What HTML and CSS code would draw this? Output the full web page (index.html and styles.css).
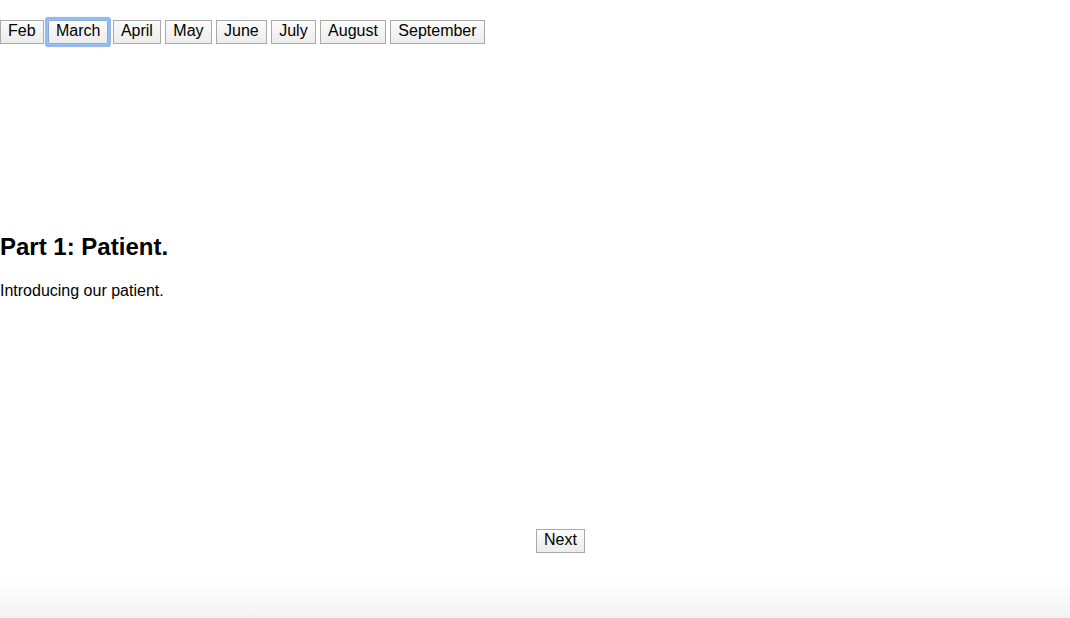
FILE: index.html
```html
<!DOCTYPE html>
<html>
<head>
<meta charset="utf-8">
<link rel="stylesheet" href="styles.css">
</head>
<body>
<nav class="months">
  <button class="btn">Feb</button>
  <button class="btn focused">March</button>
  <button class="btn">April</button>
  <button class="btn">May</button>
  <button class="btn">June</button>
  <button class="btn">July</button>
  <button class="btn">August</button>
  <button class="btn">September</button>
</nav>
<main class="content">
  <h2 class="title">Part 1: Patient.</h2>
  <p class="intro">Introducing our patient.</p>
</main>
<div class="pager">
  <button class="btn">Next</button>
</div>
<div class="fade"></div>
</body>
</html>
```
FILE: styles.css
```css
html, body {
  margin: 0;
  padding: 0;
  background: #fff;
}
body {
  font-family: "Liberation Sans", Arial, sans-serif;
  color: #000;
  height: 618px;
  display: flex;
  flex-direction: column;
  overflow: hidden;
}
.months {
  display: flex;
  gap: 4.45px;
  padding-top: 20px;
}
.btn {
  font-family: "Liberation Sans", Arial, sans-serif;
  font-size: 16px;
  line-height: 19px;
  padding: 0 7px 3px 7px;
  margin: 0;
  border: 1px solid #a9a9a9;
  border-radius: 0;
  background: linear-gradient(#fbfbfb, #ececec);
  color: #000;
}
.focused {
  box-shadow: 0 0 0 1px #9ec3f3, 0 0 1px 3px #8ab6ee;
  border-color: #8aa6cc;
  border-radius: 1px;
}
.content {
  padding-top: 189px;
}
.title {
  font-size: 24px;
  font-weight: bold;
  line-height: 28px;
  margin: 0 0 21px 0;
}
.intro {
  font-size: 16px;
  line-height: 18px;
  margin: 0;
}
.pager {
  display: flex;
  padding-left: 536px;
  margin-top: 229px;
}
.fade {
  flex: 1;
  margin-top: 17px;
  background: linear-gradient(#ffffff, #fefefe 30%, #f2f2f2);
}
```
